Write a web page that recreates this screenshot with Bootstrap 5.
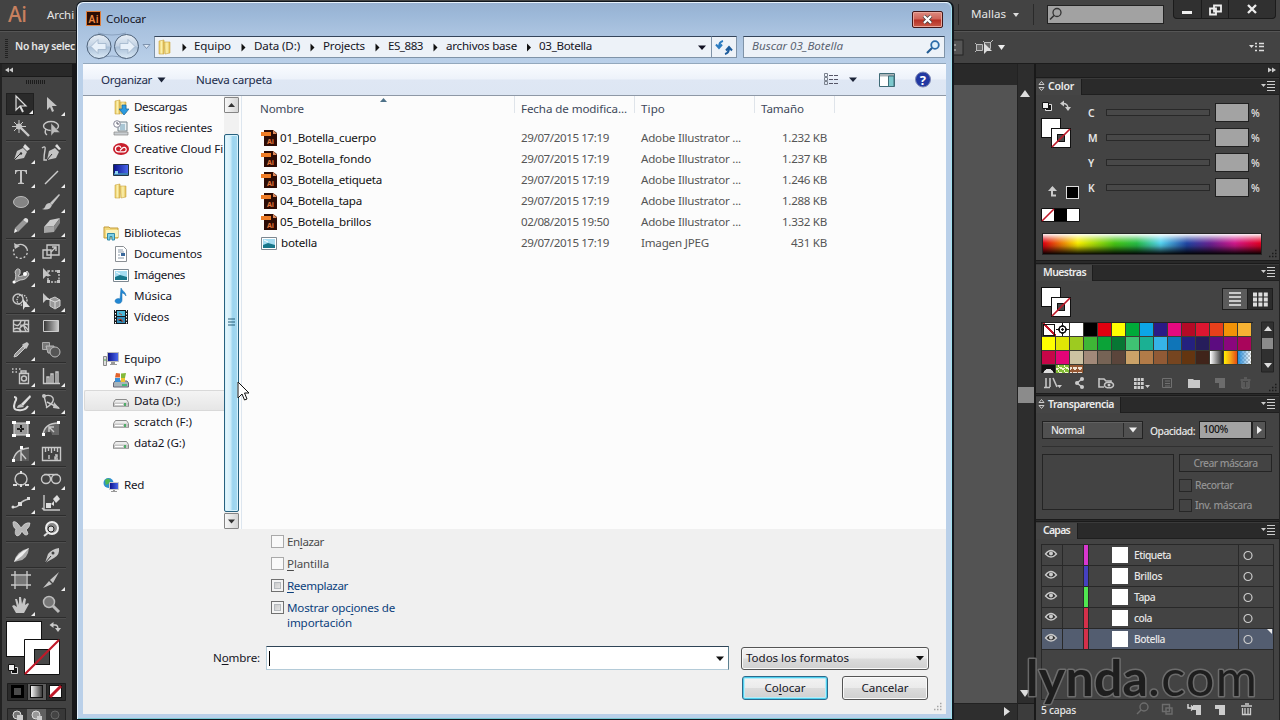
<!DOCTYPE html>
<html lang="es">
<head>
<meta charset="utf-8">
<meta name="viewport" content="width=device-width, initial-scale=1">
<title>Colocar</title>
<link href="https://cdn.jsdelivr.net/npm/bootstrap@5.3.0/dist/css/bootstrap.min.css" rel="stylesheet">
<style>
body{width:1280px;height:720px;overflow:hidden;background:#424242;font:11.6px/16px "Noto Sans","Open Sans",sans-serif;color:#111}
svg{display:block;flex:none;overflow:visible}
[data-w]{white-space:nowrap;display:inline-block}
.app{height:720px;color:#e6e6e6;font-size:10.3px;font-weight:500}
.menubar{height:31px;border-bottom:1px solid #252525;background:#434343}
.ctrlbar{height:33px;border-top:1px solid #555;border-bottom:1px solid #1c1c1c;background:#434343}
.vsep{width:1px;height:21px;background:#2a2a2a}
.menutext{font-size:11.6px;line-height:20px;font-weight:400}
.winbtns{height:19px;width:103px;border:1px solid #1b1b1b;border-top:0;border-radius:0 0 4px 4px;background:#303030}
.winbtns>span{border-right:1px solid #1b1b1b;height:18px}
.toolbox{width:76px;background:#424242;border-left:2px solid #222;border-right:4px solid #17171a}
.tb-head{height:13px;background:#292929;border-bottom:1px solid #1a1a1a}
.tb-group{border-bottom:1px solid #2d2d2d;box-shadow:0 1px #4e4e4e;width:60px;margin-left:4px}
.tool-cell{width:30px;height:24px;position:relative}
.tool-cell.more::after{content:"";position:absolute;right:1px;bottom:1px;border:2px solid transparent;border-right-color:#eee;border-bottom-color:#eee}
.tool-cell.on{background:#2a2a2a;box-shadow:inset 0 0 0 1px #202020;width:28px;height:22px;margin-right:2px}
.canvas-col{background:#535353;border-top:21px solid #292929}
.hbar{height:17px;background:#2e2e2e;border-top:1px solid #222}
.vscroll{width:17px;background:#2d2d2d;border-left:1px solid #222}
.vthumb{height:16px;background:#8b8b8b}
.dock{width:246px;border-left:2px solid #191919;border-right:1px solid #232323}
.dock-head{height:14px;background:#292929;border-bottom:1px solid #1c1c1c}
.tabbar{height:17px;background:#2a2a2a;border-bottom:1px solid #1f1f1f;border-top:1px solid #3a3a3a}
.ptab{background:#454545;height:16px;font-weight:600;font-size:10.5px;line-height:14px;border-right:1px solid #1d1d1d;color:#ececec}
.pbody{background:#434343}
.pgap{height:4px;background:#292929;border-top:1px solid #1b1b1b;border-bottom:1px solid #1b1b1b;flex:none}
.slide{width:104px;height:7px;border:1px solid #282828;background:#484848}
.numbox{width:34px;height:19px;background:#a3a3a3;border:1px solid #202020}
.spectrum{width:220px;height:22px;border:1px solid #252525;background:linear-gradient(to bottom,rgba(255,255,255,.95) 0,rgba(255,255,255,.35) 25%,transparent 45%,rgba(0,0,0,.15) 60%,rgba(0,0,0,.95) 100%),linear-gradient(to right,#e00012,#f8ee00 16%,#46c515 33%,#27bd46 43%,#55d3ef 54%,#2145a4 66%,#6b2291 77%,#d1188b 88%,#e30021)}
.sw-grid{width:212px;height:51px;border-left:1px solid #222;border-top:1px solid #222;overflow:hidden;align-content:flex-start}
.sw-grid>i{width:14px;height:14px;border:1px solid #3b3b33;border-top:0;border-left:0}
.dd{width:101px;height:18px;border:1px solid #222;background:#505050;box-shadow:inset 0 1px #616161}
.dim{color:#929292}
.layer{height:21px;border-bottom:1px solid #282828}
.layer.on{background:#535d70}
.layer>div{height:20px}
.bl{border-left:1px solid #292929}
.dlg{position:absolute;left:76px;top:1px;width:878px;height:719px;border:1px solid #10161d;border-radius:7px 7px 0 0;background:#bad0e9;box-shadow:inset 1px 1px #e7f1fb,inset -1px 0 #9fe0ed,inset 0 -1px #78c7d2;color:#15151f;border-right-width:2px}
.titlebar{height:27px;background:linear-gradient(#98b1d1,#9cb8d8 40%,#a9c2df);border-radius:6px 6px 0 0;margin:1px 1px 0}
.closebtn{width:31px;height:17px;border:1px solid #42171a;border-radius:2px;box-shadow:inset 0 0 0 1px #e9a59a;background:linear-gradient(#dc8b80,#cf6257 48%,#b52e23 52%,#c95b49)}
.navrow{height:33px;background:linear-gradient(#a9c2df,#bad0e9);margin:0 1px}
.addr{height:22px;border:1px solid #7f93a8;border-top-color:#34445a;background:#edf2f8}
.cmdbar{height:33px;background:linear-gradient(#fafcff,#edf2fa 49%,#dfe7f4 51%,#dde6f3);border-bottom:1px solid #8e98a6;border-top:1px solid #93a8bd;color:#1c2c4a}
.inner{margin:0 7px 0 6px;width:863px}
.side{width:141px;overflow:hidden}
.side .nv{height:21px;padding-left:30px}
.side .nv.hd{padding-left:20px}
.side .nv.sel{background:linear-gradient(#f4f4f4,#e6e6e6);border:1px solid #d9d9d9;border-right:0;border-radius:2px 0 0 2px;margin-left:1px;padding-left:28px}
.nv svg{margin-right:5px}
.sbar{width:15px;background:#f1f1f1}
.sbtn{height:16px;border:1px solid #858585;background:linear-gradient(to right,#f7f7f7,#d5d5d5);border-radius:1px}
.sthumb{height:378px;margin-bottom:1px;border:1px solid #27617f;border-radius:2px;background:linear-gradient(to right,#e8f7fd 0,#d2effb 40%,#9bd4ef 60%,#a7daf0);box-shadow:inset 0 0 0 1px #d6f1fb}
.fhead>div{height:17px;border-right:1px solid #dfe4ea;color:#40485a;padding-top:4px;line-height:17px}
.frow{height:21px;color:#555}
.frow .nm{color:#111}
.btmpane{height:185px;background:#f0f0f0}
.cbx{width:13px;height:13px;border:1px solid #a9a9a9;background:#f9f9f9;flex:none}
.cbx.en{border-color:#707070;background:linear-gradient(135deg,#bbb,#f3f3f3);box-shadow:inset 0 0 0 2px #f4f4f4,inset 0 0 0 3px #b5b9bd}
.wbtn{height:24px;border:1px solid #555;border-radius:3px;background:linear-gradient(#f3f3f3,#ebebeb 48%,#dcdcdc 52%,#d0d0d0);box-shadow:inset 0 0 0 1px #fafafa}
.wbtn.def{border-color:#2c6a8c;box-shadow:inset 0 0 0 1px #4fd0ee,inset 0 0 0 2px #b9ebf7}
.lk{color:#0b3f7c}
.pointer{position:absolute;left:237px;top:381px}
.brandmark{position:absolute;left:1020px;top:640px}
u{text-underline-offset:2px}
</style>
</head>
<body>
<div class="app d-flex flex-column">
  <div class="menubar d-flex">
    <svg width="43" height="30"><text x="8" y="22" font-family="Noto Sans" font-size="21" font-weight="500" fill="#c8805f" textLength="19">Ai</text></svg>
    <span data-w="27" class="ms-1 menutext" style="margin-top:5px">Archi</span>
    <div class="d-flex ms-auto">
      <span class="vsep mt-1"></span>
      <span data-w="35" class="mt-1 ms-2 ps-1 menutext">Mallas</span>
      <svg width="36" height="28"><path d="M7 13h6l-3 4z" fill="#ddd"/><path d="M27.500 4v21" stroke="#2a2a2a"/></svg>
      <svg width="123" height="28"><rect x="5.500" y="5.500" width="116" height="18" fill="#a2a2a2" stroke="#222"/><circle cx="15" cy="12.500" r="4" fill="none" stroke="#333" stroke-width="1.300"/><path d="M12 15.500l-4 4" stroke="#333" stroke-width="1.600"/></svg>
      <div class="winbtns d-flex ms-2 me-1"><span style="width:28px"><svg width="27" height="18"><path d="M8 11h10v3H8z" fill="#eee"/></svg></span><span style="width:27px"><svg width="27" height="18"><path d="M12 5.500h7v6h-7zM8 8.500h6v6H8z" fill="#303030" stroke="#eee" stroke-width="1.800"/></svg></span><span class="border-0"><svg width="46" height="18"><path d="M19 5l8 8M27 5l-8 8" stroke="#eee" stroke-width="2.300"/></svg></span></div>
    </div>
  </div>
  <div class="ctrlbar d-flex align-items-center">
    <svg width="15" height="30"><path d="M6.500 6v19" stroke="#222" stroke-width="3" stroke-dasharray="1 1"/></svg>
    <b data-w="60" class="fw-semibold" style="margin-top:-3px">No hay selec</b>
    <div class="ms-auto d-flex"><svg width="327" height="31"><rect x="-5" y="8" width="15" height="15" fill="#555" stroke="#252525"/><path d="M0 13h3M0 18h3" stroke="#ccc"/><g fill="#666" stroke="#bbb"><path d="M23.500 12.500h6v6h-6zM31.500 10.500h6v6h-6z"/><path d="M22 11l2 2M30 9l2 2M40 8l-3 3M22 20l2-2"/></g><path d="M31 11v11l3-3h5z" fill="#ddd"/><path d="M45 13h7l-3.500 5z" fill="#eee"/><path d="M296 13h5l-2.500 3z" fill="#ddd"/><path d="M302 11.500h2M306 11.500h5M302 14.500h2M306 14.500h5M302 18.500h2M306 18.500h5" stroke="#ddd" stroke-width="1.500"/></svg></div>
  </div>
  <div class="d-flex flex-grow-1" style="min-height:0">
    <aside class="toolbox">
      <div class="tb-head"><svg width="40" height="12"><path d="M7 3.500v5l-4-2.500zM11 3.500v5l-4-2.500z" fill="#ccc"/></svg></div>
      <svg width="70" height="16"><path d="M24 5h20" stroke="#1c1c1c" stroke-width="4" stroke-dasharray="1 1"/></svg>
      <div id="tools"></div>
      <svg width="70" height="102" viewBox="2 618 70 102" style="overflow:hidden">
        <rect x="6.500" y="621.500" width="35" height="35" fill="#fff" stroke="#111"/>
        <path d="M24.500 639.500h35v35h-35z" fill="#fff" stroke="#111"/><rect x="34.500" y="649.500" width="15" height="15" fill="#484848" stroke="#111"/><path d="M25 674L59 640" stroke="#c01828" stroke-width="2.200"/>
        <path d="M52 625h3q3 0 3 4" fill="none" stroke="#ccc" stroke-width="1.400"/><path d="M49.500 625l4-3v6zM55 628h6l-3 4z" fill="#ccc"/>
        <path d="M11.500 667.500h6v6h-6z" fill="#111" stroke="#ddd"/><path d="M8.500 664.500h6v6h-6z" fill="#eee" stroke="#111"/>
        <path d="M7.500 683.500h58v17h-58z" fill="#2b2b2b" stroke="#1d1d1d"/><path d="M27.500 683.500h19v17h-19z" fill="#5c5c5c" stroke="#1d1d1d"/>
        <rect x="12.500" y="686.500" width="10" height="10" fill="#4b4b4b" stroke="#000" stroke-width="3"/>
        <linearGradient id="g1"><stop stop-color="#fff"/><stop offset="1" stop-color="#333"/></linearGradient><rect x="30.500" y="685.500" width="12" height="12" fill="url(#g1)" stroke="#111"/>
        <rect x="49.500" y="685.500" width="12" height="12" fill="#fff" stroke="#111"/><path d="M50 697l11-11" stroke="#c01828" stroke-width="3"/>
        <path d="M7.500 708.500h58v14h-58z" fill="#383838" stroke="#242424"/><path d="M27 709h19v12h-19z" fill="#606060"/>
        <g fill="#777" stroke="#ddd"><circle cx="17" cy="715" r="4"/><circle cx="36" cy="715" r="4" fill="#999"/><circle cx="55" cy="715" r="4" fill="#444" stroke="#666"/></g><path d="M17 715h6v5h-6zM37 716h5v4h-5z" fill="#ccc"/>
      </svg>
    </aside>
    <main class="flex-grow-1 d-flex flex-column">
      <div class="canvas-col flex-grow-1"></div>
      <div class="hbar d-flex justify-content-end"><svg width="16" height="16"><path d="M3 3v9l6-4.500z" fill="#ddd"/></svg></div>
    </main>
    <div class="vscroll d-flex flex-column"><svg width="16" height="323"><path d="M2 33h10l-5-7z" fill="#ddd"/></svg><div class="vthumb"></div><svg width="16" height="316"><path d="M2 287h10l-5 7z" fill="#ddd"/><path d="M0 300.500h16" stroke="#1c1c1c"/><path d="M0 301h16v16H0z" fill="#3c3c3c"/></svg></div>
    <aside class="dock d-flex flex-column">
      <div class="dock-head d-flex justify-content-end"><svg width="14" height="13"><path d="M3 3.500v5l4-2.500zM7 3.500v5l4-2.500z" fill="#ccc"/></svg></div>
      <div class="tabbar d-flex justify-content-between"><span class="ptab d-flex" style="width:46px"><svg width="12" height="14"><path d="M3 5.500l2.500-3 2.500 3zM3 8.500l2.500 3 2.500-3z" fill="none" stroke="#ccc"/></svg><span data-w="26">Color</span></span><svg width="18" height="15"><use href="#pm"/></svg></div>
      <div class="pbody" style="height:165px">
        <div class="d-flex" style="height:133px">
          <svg width="56" height="133" viewBox="1036 95 56 133">
            <path d="M1045.500 104.500h6v6h-6z" fill="#111" stroke="#ddd"/><path d="M1042.500 102.500h6v6h-6z" fill="#eee" stroke="#111"/>
            <path d="M1063 103.500q5 0 5 5" fill="none" stroke="#ccc" stroke-width="1.300"/><path d="M1060 103.500l4-3v6zM1065 107h6l-3 4z" fill="#ccc"/>
            <g id="fs"><rect x="1041.500" y="118.500" width="19" height="19" fill="#fff" stroke="#111"/><rect x="1051.500" y="128.500" width="19" height="19" fill="#fff" stroke="#111"/><rect x="1057.500" y="134.500" width="7" height="7" fill="#484848" stroke="#111"/><path d="M1052 147l18-18" stroke="#c01828" stroke-width="1.700"/></g>
            <path d="M1052 187.500v8h4" fill="none" stroke="#ccc" stroke-width="2"/><path d="M1048 191h9l-4.500-5z" fill="#ccc"/>
            <rect x="1066.500" y="186.500" width="12" height="12" fill="#000" stroke="#ddd"/>
            <path d="M1041.500 208.500h38v13h-38z" fill="#fff" stroke="#111"/><path d="M1054 209h13v12h-13z"/><path d="M1042 221l12-12" stroke="#c01828" stroke-width="1.600"/>
          </svg>
          <div id="cmyk" style="padding-top:5px"></div>
        </div>
        <div class="d-flex align-items-end justify-content-between"><div class="spectrum" style="margin-left:6px"></div><svg width="14" height="27"><use href="#grip" y="4"/></svg></div>
      </div>
      <div class="pgap"></div>
      <div class="tabbar d-flex justify-content-between"><span class="ptab ps-2" style="width:57px"><span data-w="43" style="margin-left:-1px">Muestras</span></span><svg width="18" height="15"><use href="#pm"/></svg></div>
      <div class="pbody" style="height:112px">
        <div class="d-flex justify-content-between" style="height:41px"><svg width="40" height="41" viewBox="1036 112 40 41"><use href="#fs"/></svg>
          <svg width="57" height="41"><rect x=".5" y="7.500" width="25" height="21" fill="#5b5b5b" stroke="#1d1d1d"/><rect x="25.500" y="7.500" width="25" height="21" fill="#2c2c2c" stroke="#1d1d1d"/><path d="M7 12h12M7 16h12M7 20h12M7 24h12" stroke="#eee" stroke-width="1.600"/><path d="M31 13.500h15M31 18.500h15M31 23.500h15" stroke="#ddd" stroke-width="4" stroke-dasharray="4 1.400"/></svg></div>
        <div class="d-flex" style="padding-left:5px"><div class="sw-grid d-flex flex-wrap" id="sw"></div><svg class="ms-2" width="14" height="51"><path d="M.5 0v50h12V0z" fill="#303030" stroke="#222"/><path d="M3 9h8L7 4zM3 41h8l-4 5z" fill="#ddd"/><path d="M1 16h11v11H1z" fill="#8b8b8b"/></svg></div>
        <svg width="243" height="20" viewBox="1036 374 243 20">
          <g fill="none" stroke="#c4c4c4" stroke-width="1.600"><path d="M1046 379v9M1050 379v9M1053 379l4 9M1044 388.500h6"/><path d="M1082 380l-5 4 5 4"/><path d="M1099 380h5l2 2h5v2M1099 379v9h5"/><ellipse cx="1109" cy="386" rx="4.500" ry="2.800"/></g><circle cx="1109" cy="386" r="1.500" fill="#ccc"/><circle cx="1082" cy="380" r="2" fill="#ccc"/><circle cx="1082" cy="388" r="2" fill="#ccc"/><circle cx="1077" cy="384" r="2" fill="#ccc"/>
          <path d="M1057 386h5l-2.500 3zM1145 386h5l-2.500 3z" fill="#ccc"/><path d="M1134 380.500h10M1134 384.500h10M1134 388.500h10" stroke="#ccc" stroke-width="3" stroke-dasharray="2.700 .8"/>
          <g fill="none" stroke="#707070"><path d="M1162.500 379.500h9v9h-9zM1165 382h5M1165 384.500h5M1165 387h5"/><path d="M1240.500 381h10M1242 382v7h7v-7M1244 383v5M1247 383v5M1244 379h3"/></g><path d="M1188 380h5l1 1h6v8h-12z" fill="#c8c8c8"/><path d="M1215 379h10v10h-6v-5h-4z" fill="#6c6c6c"/>
          <g transform="translate(1265 367)"><use href="#grip"/></g>
        </svg>
      </div>
      <div class="pgap" style="height:3px"></div>
      <div class="tabbar d-flex justify-content-between"><span class="ptab d-flex" style="width:85px"><svg width="12" height="14"><path d="M3 5.500l2.500-3 2.500 3zM3 8.500l2.500 3 2.500-3z" fill="none" stroke="#ccc"/></svg><span data-w="66">Transparencia</span></span><svg width="18" height="15"><use href="#pm"/></svg></div>
      <div class="pbody" style="height:106px;padding:8px 6px 0">
        <div class="d-flex align-items-center" style="height:18px">
          <div class="dd d-flex align-items-center justify-content-between ps-1"><span data-w="33" class="ms-1">Normal</span><svg width="20" height="16"><path d="M1.500 1v14" stroke="#2a2a2a"/><path d="M7 5.500h8l-4 5z" fill="#eee"/></svg></div>
          <span data-w="45" style="margin-left:7px;padding-top:2px">Opacidad:</span>
          <div class="numbox" style="margin-left:4px;width:53px;height:18px;color:#111;line-height:15px;padding-left:3px"><span data-w="25">100%</span></div>
          <svg width="15" height="18"><path d="M.5 .5h13v17H.5z" fill="#555" stroke="#222"/><path d="M5 5v8l5-4z" fill="#eee"/></svg>
        </div>
        <div style="height:1px;background:#303030;margin:7px 0 7px"></div>
        <div class="d-flex dim" style="gap:5px"><div style="width:132px;height:56px;border:1px solid #242424"></div>
          <div><div class="text-center" style="width:93px;height:18px;border:1px solid #242424;line-height:16px"><span data-w="64">Crear máscara</span></div>
          <div class="d-flex" style="margin-top:7px;height:13px"><div style="width:13px;height:13px;border:1px solid #272727"></div><span data-w="38" style="margin-left:3px;line-height:12px">Recortar</span></div>
          <div class="d-flex" style="margin-top:7px;height:13px"><div style="width:13px;height:13px;border:1px solid #272727"></div><span data-w="57" style="margin-left:3px;line-height:12px">Inv. máscara</span></div></div></div>
      </div>
      <div class="pgap" style="height:3px"></div>
      <div class="tabbar d-flex justify-content-between"><span class="ptab ps-2" style="width:42px"><span data-w="27" style="margin-left:-1px">Capas</span></span><svg width="18" height="15"><use href="#pm"/></svg></div>
      <div class="pbody flex-grow-1" style="padding:5px 5px 0">
        <div id="layers" style="height:156px;border:1px solid #282828;width:233px"></div>
        <div class="d-flex" style="height:19px"><span data-w="35" style="line-height:20px">5 capas</span><svg class="ms-auto" width="140" height="19" viewBox="1134 700 140 19"><g fill="none" stroke="#6d6d6d" stroke-width="1.400"><circle cx="1144" cy="707" r="4"/><path d="M1141 710l-4 4M1162.500 704.500h7v7h-7zM1166 708h6v6h-6z"/></g><path d="M1188 704v4h5m-2-2.500l2.500 2.500-2.500 2.500" stroke="#ddd" fill="none" stroke-width="1.400"/><path d="M1193 705h8v10h-5v-5h-3zM1215 705h10v10h-6v-6h-4z" fill="#ccc"/><path d="M1241 706h11M1242.500 708v6.500h8V708M1245 708v6M1248 708v6M1245 704h4" stroke="#ccc" stroke-width="1.300" fill="none"/></svg></div>
      </div>
    </aside>
  </div>
</div>

<svg width="0" height="0" style="position:absolute">
  <defs>
    <g id="pm"><path d="M0 5h5L2.500 8z" fill="#ccc"/><path d="M6 2.500h8M6 5.500h8M6 8.500h8M6 11.500h8" stroke="#ccc"/></g>
    <g id="grip"><path d="M10 18.500h2M7 21.500h5M4 24.500h8" stroke="#1b1b1b" stroke-width="1.500" stroke-dasharray="1.500 1.500"/></g>
    <linearGradient id="fo"><stop stop-color="#e9c95e"/><stop offset=".5" stop-color="#fbf0ae"/><stop offset="1" stop-color="#e0b94a"/></linearGradient>
    <linearGradient id="ball" x2="0" y2="1"><stop stop-color="#e9f0f7"/><stop offset=".48" stop-color="#c2d2e4"/><stop offset=".52" stop-color="#a9bfd7"/><stop offset="1" stop-color="#dcebf7"/></linearGradient>
    <linearGradient id="scr"><stop stop-color="#0a0f88"/><stop offset="1" stop-color="#4c6bf0"/></linearGradient>
    <symbol id="folder" viewBox="0 0 16 16"><path d="M2 2l5-1v14H2z" fill="url(#fo)" stroke="#c9a545" stroke-width=".6"/><path d="M7 3h6v11l-5 1z" fill="url(#fo)" stroke="#c9a545" stroke-width=".6"/></symbol>
    <symbol id="down" viewBox="0 0 16 16"><use href="#folder"/><path d="M9 6h4v4h3l-5 6-5-6h3z" fill="#2c9be0" stroke="#13629c" stroke-width=".7"/></symbol>
    <symbol id="recent" viewBox="0 0 16 16"><path d="M5 2h9v9H5z" fill="#e8f0f4" stroke="#76858c"/><path d="M7 5h5M7 7h5M7 9h5" stroke="#6b9cb4"/><circle cx="4" cy="4" r="3.300" fill="#fff" stroke="#889"/><path d="M4 2v2h2" stroke="#556" fill="none"/><path d="M1 12h14v3H1z" fill="#c9ced2" stroke="#888" stroke-width=".7"/></symbol>
    <symbol id="cc" viewBox="0 0 16 16"><ellipse cx="8" cy="8" rx="8" ry="6" fill="#c81e2c"/><path d="M7 9.500L9.500 7a2.200 2.200 0 1 1 1.500 3.800H5.500a2.900 2.900 0 1 1 2.500-4" fill="none" stroke="#fff" stroke-width="1.200"/></symbol>
    <symbol id="desk" viewBox="0 0 16 16"><path d="M.5 2.500h15v11H.5z" fill="url(#scr)" stroke="#234"/><path d="M1 11h14v2H1z" fill="#3c7fb4"/><path d="M2 9h3v3H2z" fill="#8fd3ef"/></symbol>
    <symbol id="libs" viewBox="0 0 16 16"><path d="M1 2h5l1 1h8v10H1z" fill="#f2d97c" stroke="#c39b3a"/><path d="M3 5h12v7H3z" fill="#fbf2be"/><path d="M4.500 15V8.500h7V15H9v-3.500H7V15z" fill="#7fd0e8" stroke="#3389a5"/></symbol>
    <symbol id="doc" viewBox="0 0 16 16"><path d="M2.500 .5h8l3 3v12h-11z" fill="#fff" stroke="#8a8f94"/><path d="M5 4h5M5 6h6M5 12h6M5 9h2" stroke="#8a99a8"/><path d="M8 7h4v3H8z" fill="#39689c"/></symbol>
    <symbol id="img" viewBox="0 0 16 16"><path d="M.5 2.500h15v12H.5z" fill="#fff" stroke="#7c8790"/><path d="M2 4h12v9H2z" fill="#a5dcf1"/><path d="M2 10l5-2 7 2v3H2z" fill="#17768a"/><path d="M3 5l4 2" stroke="#fff"/></symbol>
    <symbol id="mus" viewBox="0 0 16 16"><path d="M8 0c1 3 5 4 5 8-1-2-3-3-4-3v7c0 5-7 4-7 1 0-2 3-3 5-2z" fill="#2287d3" stroke="#176cad" stroke-width=".5"/></symbol>
    <symbol id="vid" viewBox="0 0 16 16"><path d="M1 1h14v14H1z" fill="#15191d"/><path d="M4 2h8v5H4z" fill="#4bb7d8"/><path d="M4 8h8v6H4z" fill="#328bb8"/><path d="M6 4l3 2M5 11l3-1 2 3" stroke="#c04b37"/><path d="M2.500 1v14M13.500 1v14" stroke="#fff" stroke-dasharray="1.500 1.500"/></symbol>
    <symbol id="pc" viewBox="0 0 16 16"><path d="M4.500 1.500h11v9h-11z" fill="url(#scr)" stroke="#bbb"/><path d="M8 11h4v2h2v1H7v-1h1z" fill="#999"/><path d="M.5 5.500h3v9h-3z" fill="#ddd" stroke="#888"/><path d="M1 9h2" stroke="#4a4"/></symbol>
    <symbol id="win" viewBox="0 0 16 16"><path d="M2 9h12l1.500 2v4H.5v-4z" fill="#a8b4ba" stroke="#667"/><path d="M9 13h5" stroke="#2b6" stroke-width="1.500"/><path d="M3 1l4 .5v4H2z" fill="#e2632c"/><path d="M8 1.500l5-.5-1 5H8z" fill="#83b93a"/><path d="M2 6h5v4H2z" fill="#3a8fd8"/><path d="M8 6h4v4H8z" fill="#f1c232"/></symbol>
    <symbol id="drv" viewBox="0 0 16 16"><path d="M2.500 6.500h11l2 3v4h-15v-4z" fill="#ececec" stroke="#8a8a8a"/><path d="M1 9.500h14v4H1z" fill="#c6c6c6"/><path d="M2 11.500h8" stroke="#fff"/><path d="M12 10v3" stroke="#2aa34a" stroke-width="1.500"/></symbol>
    <symbol id="net" viewBox="0 0 16 16"><circle cx="5.500" cy="6" r="5" fill="#2e8fd0"/><path d="M2 3q4-3 5 0t-2 4-2 3z" fill="#4fb854"/><path d="M6.500 5.500h9v7h-9z" fill="url(#scr)" stroke="#ccc"/><path d="M10 13h2v1h2v1H8v-1h2z" fill="#999"/></symbol>
    <symbol id="aif" viewBox="0 0 16 16"><path d="M3 0h9l4 3v13H3z" fill="#2c0b05"/><path d="M12 0l4 4h-4z" fill="#df8a5c"/><path d="M0 2h10v4H0z" fill="#f07d26"/><text x="6" y="14" font-family="Noto Sans" font-size="7" font-weight="bold" fill="#e2763a">Ai</text></symbol>
  </defs>
</svg>

<section class="dlg">
  <div class="titlebar d-flex align-items-center"><svg class="ms-2" width="15" height="17" style="margin-right:5px;margin-top:4px"><path d="M.5 1.500h14v14H.5z" fill="#2a0c04" stroke="#e27d38"/><text x="2.500" y="12.500" font-family="Noto Sans" font-size="10" font-weight="600" fill="#ed8a45" textLength="10">Ai</text></svg><span data-w="40" style="margin-top:4px">Colocar</span>
    <div class="closebtn ms-auto" style="margin-right:8px;margin-top:5px"><svg width="29" height="15"><path d="M11 4l7 7M18 4l-7 7" stroke="#444" stroke-width="3.800"/><path d="M11 4l7 7M18 4l-7 7" stroke="#fff" stroke-width="2.200"/></svg></div></div>
  <div class="navrow d-flex align-items-center">
    <svg width="76" height="33"><path d="M20 3q14 4 28 0M20 29q14-6 28 0" fill="none" stroke="#8aa2bf"/><g stroke="#4c6078"><circle cx="21" cy="16.500" r="12" fill="url(#ball)"/><circle cx="48.500" cy="16.500" r="12" fill="url(#ball)"/></g><g fill="#e8f1fa" stroke="#9fb4ca" stroke-width=".8"><path d="M13 16.500l7-7v4h8v6h-8v4zM57 16.500l-7-7v4h-8v6h8v4z"/></g><path d="M65 14.500h7l-3.500 4z" fill="#dfeaf6" stroke="#7e93ae"/></svg>
    <div class="addr d-flex align-items-center" style="width:558px;padding-left:2px"><svg width="16" height="16"><use href="#folder"/></svg><span id="crumbs" class="d-flex flex-grow-1"></span><svg width="16" height="20"><path d="M3 8.500h8l-4 4.500z" fill="#112"/></svg></div>
    <div class="addr" style="width:25px;border-left:0"><svg width="24" height="20"><path d="M11 4q-4 1-4 6m-3-2.500l3 3.500 3-3.500" fill="none" stroke="#2c7cc0" stroke-width="2"/><path d="M13 17q4-1 4-6m-3 2.500l3-3.500 3 3.500" fill="none" stroke="#1d5c9c" stroke-width="2"/></svg></div>
    <div class="addr d-flex align-items-center justify-content-between" style="width:202px;margin-left:6px;padding-left:8px"><i data-w="91" style="color:#5b6472;margin-top:-2px">Buscar 03_Botella</i><svg width="20" height="20"><circle cx="11" cy="8" r="3.800" fill="#dff0fb" stroke="#2b6ca8" stroke-width="1.800"/><path d="M8 11l-5 5" stroke="#235c93" stroke-width="2.200"/></svg></div>
  </div>
  <div class="inner">
    <div class="cmdbar d-flex align-items-center"><span data-w="51" style="margin-left:18px">Organizar</span><svg width="17" height="16"><path d="M5.500 5.500h8l-4 5z" fill="#1c2438"/></svg><span data-w="76" style="margin-left:27px">Nueva carpeta</span>
      <svg class="ms-auto" width="122" height="31"><g fill="none" stroke="#556"><path d="M.5 9.500h3v3h-3zM.5 13.500h3v3h-3zM.5 17.500h3v3h-3z" stroke="#7b828e"/><path d="M5 11.500h10M5 15.500h10M5 19.500h10" stroke-dasharray="4 1"/></g><path d="M25 13.500h8L29 18z" fill="#1c2438"/><path d="M55.500 9.500h15v13h-15z" fill="#fff" stroke="#3f6b77"/><path d="M56 10h14v2.500H56z" fill="#aab4b8"/><path d="M64.500 12v10.500H70V12z" fill="#7cc8cd" stroke="#3f6b77"/><circle cx="99" cy="15.500" r="7.500" fill="#2238a2" stroke="#7d88b5"/><text x="95.800" y="20.500" font-size="13" font-weight="bold" fill="#fff" font-family="Noto Sans">?</text></svg></div>
    <div class="d-flex" style="height:433px;background:#fcfcfc">
      <nav class="side" id="side"></nav>
      <div class="sbar"><div style="height:1px"></div><div class="sbtn"><svg width="13" height="14"><path d="M3 9h7L6.500 5z" fill="#333"/></svg></div><div style="height:21px"></div><div class="sthumb d-flex align-items-center"><svg width="13" height="12"><path d="M3 2h7M3 5h7M3 8h7" stroke="#275f78" stroke-width="1.200"/></svg></div><div class="sbtn"><svg width="13" height="14"><path d="M3 5.500h7L6.500 9.500z" fill="#333"/></svg></div></div>
      <div class="flex-grow-1" style="border-left:1px solid #dde6ef;margin-left:2px">
        <div class="fhead d-flex"><div style="width:273px;padding-left:18px" class="d-flex"><span data-w="44">Nombre</span><svg width="100" height="10" style="margin-top:-4px"><path d="M76 6h7l-3.500-4z" fill="#4e7188"/></svg></div><div style="width:120px;padding-left:6px"><span data-w="106">Fecha de modifica...</span></div><div style="width:120px;padding-left:6px"><span data-w="24">Tipo</span></div><div style="width:80px;padding-left:6px"><span data-w="43">Tamaño</span></div></div>
        <div id="files" style="padding-top:14px"></div>
      </div>
    </div>
    <div class="btmpane">
      <div style="padding:6px 0 0 188px;height:117px">
        <div class="d-flex" style="height:22px;color:#4b4b4b"><span class="cbx"></span><span data-w="37" style="margin-left:3px;line-height:13px">En<u>l</u>azar</span></div>
        <div class="d-flex" style="height:22px;color:#4b4b4b"><span class="cbx"></span><span data-w="42" style="margin-left:3px;line-height:13px"><u>P</u>lantilla</span></div>
        <div class="d-flex lk" style="height:22px"><span class="cbx en"></span><span data-w="61" style="margin-left:3px;line-height:13px"><u>R</u>eemplazar</span></div>
        <div class="d-flex lk"><span class="cbx en"></span><div style="margin-left:3px;line-height:15px;margin-top:-1px"><span data-w="108">Mostrar opc<u>i</u>ones de</span><br><span data-w="65">importación</span></div></div>
      </div>
      <div class="d-flex align-items-center" style="height:24px;padding-left:130px"><span data-w="47">N<u>o</u>mbre:</span>
        <div class="d-flex align-items-center justify-content-between bg-white" style="width:463px;height:24px;margin-left:6px;border:1px solid #b4cbd8;border-top-color:#2f4456;border-right-color:#5c8090"><span style="width:1px;height:15px;background:#000;margin-left:2px"></span><svg width="16" height="20"><path d="M4 8.500h8L8 13z" fill="#111"/></svg></div>
        <div class="wbtn d-flex align-items-center justify-content-between" style="width:188px;margin-left:12px;padding-left:4px;height:23px"><span data-w="103">Todos los formatos</span><svg width="16" height="20"><path d="M4 8h8l-4 4.500z" fill="#111"/></svg></div></div>
      <div class="d-flex" style="margin:6px 0 0 659px"><div class="wbtn def text-center" style="width:86px;line-height:21px"><span data-w="41">Co<u>l</u>ocar</span></div><div class="wbtn text-center" style="width:86px;margin-left:14px;line-height:21px"><span data-w="47">Cancelar</span></div></div>
      <div class="d-flex justify-content-end"><svg width="14" height="12"><path d="M8 3.500h3M5 6.500h6M2 9.500h9" stroke="#a5a5a5" stroke-width="1.500" stroke-dasharray="1.500 1.500"/></svg></div>
    </div>
  </div>
</section>

<svg class="brandmark" width="260" height="80"><g font-family="Lato" font-size="50" fill="#1e1e1e" stroke="#777" stroke-opacity=".8" stroke-width="3" paint-order="stroke" stroke-linejoin="round"><text x="6" y="56" font-weight="700" textLength="122">lynda</text><text x="128" y="56" textLength="109">.com</text></g></svg>
<svg class="pointer" width="14" height="22"><path d="M1 1v16l4-4 2.500 6 2.500-1-2.500-6H12z" fill="#fff" stroke="#111"/></svg>

<script src="https://cdn.jsdelivr.net/npm/bootstrap@5.3.0/dist/js/bootstrap.bundle.min.js"></script>
<script>
const $ = id => document.getElementById(id);
const L = 'fill="none" stroke="#c8c8c8" stroke-width="1.4"', F = 'fill="#c4c4c4"';
// Toolbox groups: [height, ...[icon, flyout]]; flyout 2 is the active tool
const groups = [
 [48, [`<path d="M6 2v14l4-4h6z" fill="#333" stroke="#ddd" stroke-width="1.2"/><path d="M10 12l3 6" stroke="#ddd" stroke-width="2"/>`,2],
  [`<path d="M6 2v13l3-3 2 5 2-1-2-5h5z" ${F}/>`,1],
  [`<path d="M9 8l9 9" stroke="#c8c8c8" stroke-width="2.4"/><path d="M8 1v13M1 7.500h14M3 3l9 9M12 3l-9 9" stroke="#c8c8c8"/><circle cx="8" cy="7.500" r="3" ${F}/>`,0],
  [`<ellipse cx="10" cy="7" rx="7.500" ry="4.500" ${L}/><path d="M5 10q-2 4 1 6" ${L}/><path d="M10 4v13l3-3.500h6z" fill="#bbb" stroke="#444" stroke-width=".5"/>`,0]],
 [98, [`<path d="M3 17l3-9 6-3 4 4-3 6z" ${F}/><path d="M12 4l2-3 5 5-3 2z" fill="#ddd"/><path d="M3 17l6-6" stroke="#333"/><circle cx="10" cy="10.500" r="1.200" fill="#333"/>`,1],
  [`<path d="M6 17l2-9 6-3 4 4-3 6z" ${F}/><path d="M14 3l2-2 4 5-2 1z" fill="#ddd"/><path d="M6 17l5-6" stroke="#333"/><path d="M1 5q4-3 3 2t-1 10h3" ${L}/>`,0],
  [`<path d="M4 3h12v4h-1q0-3-3-3h-1v11q0 1 2 1v1H7v-1q2 0 2-1V4H8Q5 4 5 7H4z" ${F}/>`,1],
  [`<path d="M4 17L17 4" stroke="#ccc" stroke-width="1.500"/>`,1],
  [`<ellipse cx="10" cy="10" rx="7.500" ry="5.500" fill="#858585" stroke="#bbb"/>`,1],
  [`<path d="M18 2L9 11l2 2 8-10z" ${F}/><path d="M9 11q-4 0-5 4-1 2-3 2 8 2 10-4z" ${F}/>`,1],
  [`<path d="M3 17l1-5 3 3z" fill="#eee"/><path d="M4 12l8-8 4 3-9 9z" fill="#999"/><path d="M12 4l2-2q4 0 3 4l-1 1z" fill="#ddd"/>`,1],
  [`<path d="M3 11l6-7 10-2-6 8z" fill="#ccc"/><path d="M3 11l10-1v6l-10 1z" fill="#a5a5a5"/><path d="M13 10l6-8v5l-6 9z" fill="#888"/>`,1]],
 [75, [`<path d="M5 5a7 7 0 1 0 11 3" ${L} stroke-dasharray="2 2"/><path d="M5 5a7 7 0 0 1 11 3" ${L}/><path d="M3 2l1 6 5-3z" ${F}/>`,1],
  [`<path d="M2 9h8v8H2zM6 4h12v10H6z" ${L}/><path d="M10 11l5-5m-4 0h4v4" ${L}/>`,1],
  [`<path d="M3 17q3-7 1-11 2-5 5-2 1 4-2 6 5 2 9-5l2 3q-2 6-9 6z" fill="#8d8d8d" stroke="#ccc"/><circle cx="3" cy="16" r="1.500" fill="#fff"/><circle cx="14" cy="8" r="2" fill="#fff"/>`,1],
  [`<path d="M7 5h11v11H7z" ${L} stroke-dasharray="2 1.500"/><path d="M2 2v11l3-3h5z" ${F}/><path d="M16 4h3v3h-3zM16 14h3v3h-3zM6 14h3v3H6z" ${F}/>`,0],
  [`<circle cx="7" cy="8" r="5" ${L}/><circle cx="11" cy="9" r="5" ${L} stroke-dasharray="1.500 1"/><path d="M12 8v11l2-3h5z" fill="#ddd"/>`,1],
  [`<path d="M2 2v10l3-3h4z" ${F}/><path d="M9 8l5-2 5 3v6l-5 3-5-3z" fill="#999" stroke="#ccc"/><path d="M9 9l5 2 5-2M14 11v6M5 7l5 2" stroke="#ddd" fill="none"/>`,1]],
 [49, [`<path d="M2.500 4.500h15v11h-15z" ${L}/><path d="M3 8q5 4 7-3m0 11q-3-4 1-6 3-3 7-1M3 13q5-2 7 2M9 9q5 0 8 5M14 5q-2 6 1 10" ${L}/>`,0],
  [`<path d="M2.500 4.500h15v11h-15z" fill="url(#tg)" stroke="#ccc"/>`,0],
  [`<path d="M3 17l1-3 8-8 2 2-8 8z" fill="#999" stroke="#ccc"/><path d="M11 5l4 4 1-1 2-4-2-2-4 2z" ${F}/>`,1],
  [`<path d="M1.500 2.500h7v7h-7z" fill="#777" stroke="#aaa"/><path d="M5 6h8v7H7z" fill="#888" stroke="#bbb"/><circle cx="14" cy="12" r="5" fill="#555" stroke="#bbb"/>`,0]],
 [27, [`<path d="M8.500 7.500h9v10h-9zM10 5h5v2h-5z" ${L}/><circle cx="13" cy="12.500" r="2.500" ${L}/><path d="M1 3h9M1 6h6" stroke="#ccc" stroke-width="1.500" stroke-dasharray="1.500 2"/>`,1],
  [`<path d="M2.500 2v15.500H19M6 17v-6h2v6M10 17V8h2v9M15 17V6h2v11" ${L}/>`,1]],
 [26, [`<path d="M19 2L10 11l2 2 8-9z" fill="#ddd"/><path d="M10 11q-4 1-4 4l7-1z" ${F}/><path d="M3 4q4 0 1 5-3 8 3 8 7 1 10-4" fill="none" stroke="#ddd" stroke-width="2"/>`,1],
  [`<path d="M3 3l3 12M3 3q7-2 9 2T5 15M6 9l12 6" ${L}/><path d="M13 9l6 7-7-1z" ${F}/><circle cx="3" cy="3" r="2" ${F}/>`,1]],
 [51, [`<path d="M3 4h14v12H3z" fill="#999" stroke="#ddd"/><path d="M1 2h4v3H1zM15 2h4v3h-4zM1 15h4v3H1zM15 15h4v3h-4z" fill="#fff"/><path d="M10 6v8M6 10h8" stroke="#222" stroke-width="2" stroke-dasharray="3 1"/>`,0],
  [`<path d="M2 16Q3 4 18 4v12h-7q0-5-5-3z" fill="#666"/><path d="M2 16Q3 4 18 4M8 8l5 5M8 13V8h5" ${L}/><path d="M1 14h3v3H1zM16 2h3v3h-3z" fill="#fff"/>`,0],
  [`<path d="M2 17Q4 5 10 5h8v12z" fill="#5a5a5a"/><path d="M2 17Q4 5 18 4M10 4v13M10 9l5 6" ${L}/><path d="M1 15h3v3H1zM9 2h3v3H9z" fill="#fff"/>`,1],
  [`<path d="M1.500 3.500h18v13h-18zM4.500 4v4M7.500 4v3M10.500 4v5M13.500 4v3M16.500 4v4" ${L}/><path d="M8 11v4M14 11h2v2h-2v2h3" ${L}/>`,0]],
 [49, [`<circle cx="10" cy="10" r="6" ${L}/><path d="M10 2v3M10 15v3M2 16h4M14 16h4" stroke="#ddd" stroke-width="2"/>`,1],
  [`<circle cx="5" cy="10" r="4.500" ${L}/><circle cx="15" cy="10" r="4.500" ${L}/><path d="M3 5.500h14" ${L}/>`,1],
  [`<path d="M1 14q5 1 8-3t9-5" ${L}/><path d="M7 9h4v4H7zM16 4h3v3h-3z" fill="#ddd"/><circle cx="2" cy="14" r="1.500" fill="#ddd"/>`,1],
  [`<path d="M3 2v15h16M3 17l-2-2" ${L}/><path d="M5 10h5v5H5zM12 6l4-4 3 4-4 4zM10 11l3-3v5z" fill="#ddd"/>`,0]],
 [26, [`<path d="M10 9Q5 1 2 3q0 6 3 7-2 5 1 7 3 0 5-5 3 6 6 3-1-4-2-4 4-3 4-7-5-1-9 5z" fill="#b5b5b5" stroke="#ddd" stroke-width=".7"/>`,0],
  [`<circle cx="11" cy="9" r="6" fill="#888" stroke="#eee" stroke-width="2"/><circle cx="10" cy="10" r="3" fill="#ddd" stroke="#222"/><path d="M8 13l-5 4" stroke="#ddd" stroke-width="2"/>`,0]],
 [26, [`<path d="M3 17q2-11 15-14-1 12-11 13z" fill="#aaa"/><path d="M3 17Q6 8 18 3l-7 8z" fill="#eee"/>`,0],
  [`<path d="M4 18l3-9q4-5 11-6 1 7-5 10z" fill="#c8c8c8"/><path d="M4 18l6-7" stroke="#333"/><circle cx="12" cy="8" r="1.500" fill="#444"/>`,0]],
 [50, [`<path d="M4 1v18M16 1v18M0 5h20M0 15h20" ${L}/><path d="M5 6h10v8H5z" fill="#777"/>`,0],
  [`<path d="M2 18l6-7 3 3zM9 10l9-8-6 11z" ${F}/>`,1],
  [`<path d="M5 18l-4-7 2-1 3 2-2-8h2l2 6V2h2l1 7 2-6 2 1-1 6 3-2 1 1-5 9z" ${F}/>`,1],
  [`<circle cx="8" cy="7" r="5.500" fill="#777" stroke="#bbb" stroke-width="1.500"/><path d="M12 11l6 6" stroke="#bbb" stroke-width="3"/>`,0]]
];
$('tools').innerHTML = '<svg width="0" height="0" style="position:absolute"><linearGradient id="tg"><stop stop-color="#333"/><stop offset="1" stop-color="#ccc"/></linearGradient></svg>' + groups.map(([h, ...t]) =>
 `<div class="tb-group d-flex flex-wrap align-content-around" style="height:${h}px">` + t.map(([s, m]) =>
 `<div class="tool-cell ${m ? 'more' : ''} ${m == 2 ? 'on' : ''} d-flex align-items-center justify-content-center"><svg width="20" height="20" viewBox="0 0 20 20">${s}</svg></div>`).join('') + '</div>').join('');

$('cmyk').innerHTML = [...'CMYK'].map(c => `<div class="d-flex align-items-center" style="height:25px"><b style="width:18px;margin-left:-4px" class="fw-semibold">${c}</b><div class="slide"></div><div class="numbox" style="margin-left:5px"></div><span style="margin-left:2px">%</span></div>`).join('');

const sw = ('N R fff 000 e1000f ffff00 00ab39 0ca5e6 2a1a86 e5097f b50a26 dc1630 e8401b f39307 f6b233 ' +
 'ffff00 e0e605 9dcb20 3eb636 0ba338 087634 3fc273 1bb093 36b3e7 0f75b8 24217f 261d5b 5c0c80 8a067d a9055b ' +
 'c60648 e20477 cdc2a2 a28979 766355 5b453b cba268 b27b48 915a35 764520 643510 40241a G1 G2 G3 P1 P2 P3').split(' ');
const special = {N:'linear-gradient(to bottom right,transparent 44%,#c01828 44%,#c01828 56%,transparent 56%),#fff;transform:scaleX(-1);outline:1px solid #111;outline-offset:-2px', R:'radial-gradient(circle,#111 1px,#fff 1.5px,#fff 2.5px,#111 3px,#111 4px,transparent 4.5px),linear-gradient(#111,#111) 6px 0/1px 13px no-repeat,linear-gradient(#111,#111) 0 6px/13px 1px no-repeat,#fff',
 G1:'linear-gradient(to right,#fff,#222)', G2:'linear-gradient(to right,#fff000,#f6a417,#e34b14)', G3:'linear-gradient(to right,#2389d6,transparent),repeating-conic-gradient(#ccc 0 25%,#fff 0 50%) 0 0/4px 4px',
 P1:'radial-gradient(circle at 50% 70%,#ddd 5px,#111 5.5px)', P2:'repeating-conic-gradient(#82bd37 0 20%,#f5f7d0 0 35%) 0 0/6px 5px', P3:'repeating-conic-gradient(#945733 0 20%,#efe2d4 0 40%) 0 0/5px 5px'};
$('sw').innerHTML = sw.map(c => `<i style="background:${special[c] || '#' + c}"></i>`).join('');

$('layers').innerHTML = [['Etiqueta','d837cf',37],['Brillos','4540c0',28],['Tapa','50e650',21],['cola','d4304a',18],['Botella','d4304a',31]].map(([n, c, w], i) =>
 `<div class="layer d-flex align-items-center ${i == 4 ? 'on' : ''}"><svg width="20" height="20"><path d="M3.500 9q5.500-7 11 0-5.500 6-11 0z" fill="#333" stroke="#c9c9c9" stroke-width="1.300"/><circle cx="9" cy="8.500" r="2" fill="#ccc"/></svg><div class="bl" style="width:21px"></div><div class="bl" style="width:6px;border-right:1px solid #292929;background:#${c}"></div><div style="width:23px"></div><div style="width:16px;height:16px;background:#fff"></div><span data-w="${w}" style="margin-left:6px">${n}</span><div class="bl ms-auto" style="width:35px"><svg width="34" height="20"><circle cx="9" cy="10.500" r="4" fill="none" stroke="#ccc" stroke-width="1.200"/>${i == 4 ? '<path d="M28 0h5v5z" fill="#eee"/>' : ''}</svg></div></div>`).join('');

$('crumbs').innerHTML = [['Equipo',37,194],['Data (D:)',46,254],['Projects',42,323],['ES_883',35,388],['archivos base',71,446],['03_Botella',53,539]].map(([n, w, x], i, a) => {
 const prev = i ? a[i-1][2] + a[i-1][1] : 173;
 return `<svg width="${x - prev}" height="18"><path d="M${(x - prev) / 2 - 1} 5.500v8l4-4z" fill="#111"/></svg><span data-w="${w}" style="width:${w}px">${n}</span>`;}).join('');

$('side').innerHTML = [['down','Descargas',53],['recent','Sitios recientes',78],['cc','Creative Cloud Fi',89],['desk','Escritorio',49],['folder','capture',40],0,
 ['libs','Bibliotecas',57,1],['doc','Documentos',68],['img','Imágenes',51],['mus','Música',38],['vid','Vídeos',35],0,
 ['pc','Equipo',37,1],['win','Win7 (C:)',49],['drv','Data (D:)',46],['drv','scratch (F:)',58],['drv','data2 (G:)',51],0,['net','Red',20,1]].map(r => !r ? '<div class="nv"></div>' :
 `<div class="nv ${r[3] ? 'hd' : ''} ${r[1] == 'Data (D:)' ? 'sel' : ''} d-flex align-items-center"><svg width="16" height="16"><use href="#${r[0]}"/></svg><span data-w="${r[2]}">${r[1]}</span></div>`).join('');

$('files').innerHTML = [['01_Botella_cuerpo',96,'29/07/2015 17:19','1.232'],['02_Botella_fondo',91,'29/07/2015 17:19','1.237'],['03_Botella_etiqueta',102,'29/07/2015 17:19','1.246'],['04_Botella_tapa',82,'29/07/2015 17:19','1.288'],['05_Botella_brillos',91,'02/08/2015 19:50','1.332'],['botella',36,'29/07/2015 17:19','431']].map(([n, w, d, s], i) =>
 `<div class="frow d-flex align-items-center"><div class="nm d-flex" style="width:279px;padding-left:19px"><svg width="16" height="16" style="margin-right:${i < 5 ? 3 : 4}px"><use href="#${i < 5 ? 'aif' : 'img'}"/></svg><span data-w="${w}">${n}</span></div><div style="width:120px"><span data-w="88">${d}</span></div><div style="width:120px"><span data-w="${i < 5 ? 100 : 68}">${i < 5 ? 'Adobe Illustrator ...' : 'Imagen JPEG'}</span></div><div class="text-end" style="width:66px"><span data-w="${i < 5 ? 45 : 36}">${s} KB</span></div></div>`).join('');

document.querySelectorAll('[data-w]').forEach(e => {
 const r = document.createRange(); r.selectNodeContents(e);
 const n = e.textContent.length, w = r.getBoundingClientRect().width;
 e.style.letterSpacing = ((e.dataset.w - w) / n).toFixed(3) + 'px';
});
</script>
</body>
</html>
